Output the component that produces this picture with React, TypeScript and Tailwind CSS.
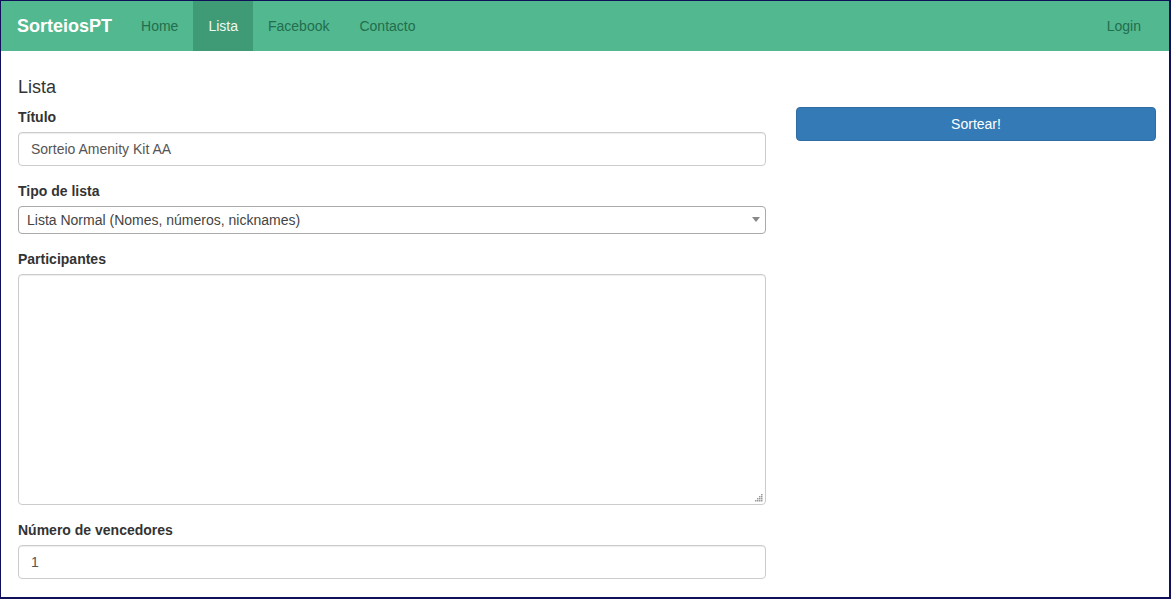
import React from "react";

export default function App() {
  const font = { fontFamily: '"Liberation Sans", Arial, sans-serif' };
  const dots: [number, number][] = [
    [6, 0],
    [4, 2],
    [6, 2],
    [2, 4],
    [4, 4],
    [6, 4],
    [0, 6],
    [2, 6],
    [4, 6],
    [6, 6],
  ];
  return (
    <div
      className="w-[1171px] h-[599px] overflow-hidden bg-white border-l border-t border-r-2 border-b-2 border-[#10105a] text-[14px] text-[#333]"
      style={font}
    >
      <nav className="h-[50px] bg-[#52b88f] flex items-stretch pl-[1px]">
        <a className="flex items-center pl-[15px] pr-[14px] text-[18px] font-bold text-white">SorteiosPT</a>
        <a className="flex items-center px-[15px] text-[#226e4d]">Home</a>
        <a className="flex items-center px-[15px] bg-[#3e9b76] text-[#eef8f2]">Lista</a>
        <a className="flex items-center px-[15px] text-[#226e4d]">Facebook</a>
        <a className="flex items-center px-[15px] text-[#226e4d]">Contacto</a>
        <a className="ml-auto flex items-center px-[15px] mr-[13px] text-[#226e4d]">Login</a>
      </nav>

      <div className="pl-[17px] pr-[13px]">
        <h4 className="mt-[26px] mb-[10px] text-[18px] leading-[20px] font-normal text-[#333]">Lista</h4>
        <div className="grid grid-cols-[748px_360px] gap-[30px]">
          <div>
            <div className="mb-[15px]">
              <label className="block font-bold leading-[20px] mb-[5px]">Título</label>
              <input
                readOnly
                value="Sorteio Amenity Kit AA"
                className="block w-full h-[34px] px-[12px] border border-[#ccc] rounded-[4px] text-[14px] text-[#555] shadow-[inset_0_1px_1px_rgba(0,0,0,0.075)] outline-none"
                style={font}
              />
            </div>
            <div className="mb-[15px]">
              <label className="block font-bold leading-[20px] mb-[5px]">Tipo de lista</label>
              <div className="relative">
                <select
                  className="block w-full h-[28px] pl-[8px] pr-[24px] border border-[#aaa] rounded-[4px] text-[14px] text-[#444] bg-white appearance-none outline-none"
                  style={font}
                  defaultValue="normal"
                >
                  <option value="normal">Lista Normal (Nomes, números, nicknames)</option>
                </select>
                <svg className="absolute right-[6px] top-[11px]" width="8" height="5" viewBox="0 0 8 5">
                  <path d="M0 0 L8 0 L4 5 Z" fill="#888" />
                </svg>
              </div>
            </div>
            <div className="mb-[15px]">
              <label className="block font-bold leading-[20px] mb-[5px]">Participantes</label>
              <div className="relative">
                <textarea
                  readOnly
                  className="block w-full h-[231px] px-[12px] py-[6px] border border-[#ccc] rounded-[4px] text-[14px] text-[#555] shadow-[inset_0_1px_1px_rgba(0,0,0,0.075)] outline-none resize-none"
                  style={font}
                />
                <svg className="absolute right-[3px] bottom-[3px]" width="8" height="8" viewBox="0 0 8 8">
                  {dots.map(([x, y], i) => (
                    <rect key={i} x={x} y={y} width="1.5" height="1.5" fill="#999" />
                  ))}
                </svg>
              </div>
            </div>
            <div>
              <label className="block font-bold leading-[20px] mb-[5px]">Número de vencedores</label>
              <input
                readOnly
                value="1"
                className="block w-full h-[34px] px-[12px] border border-[#ccc] rounded-[4px] text-[14px] text-[#555] shadow-[inset_0_1px_1px_rgba(0,0,0,0.075)] outline-none"
                style={font}
              />
            </div>
          </div>
          <div>
            <button
              className="w-full h-[34px] bg-[#337ab7] border border-[#2e6da4] rounded-[4px] text-white text-[14px]"
              style={font}
            >
              Sortear!
            </button>
          </div>
        </div>
      </div>
    </div>
  );
}
